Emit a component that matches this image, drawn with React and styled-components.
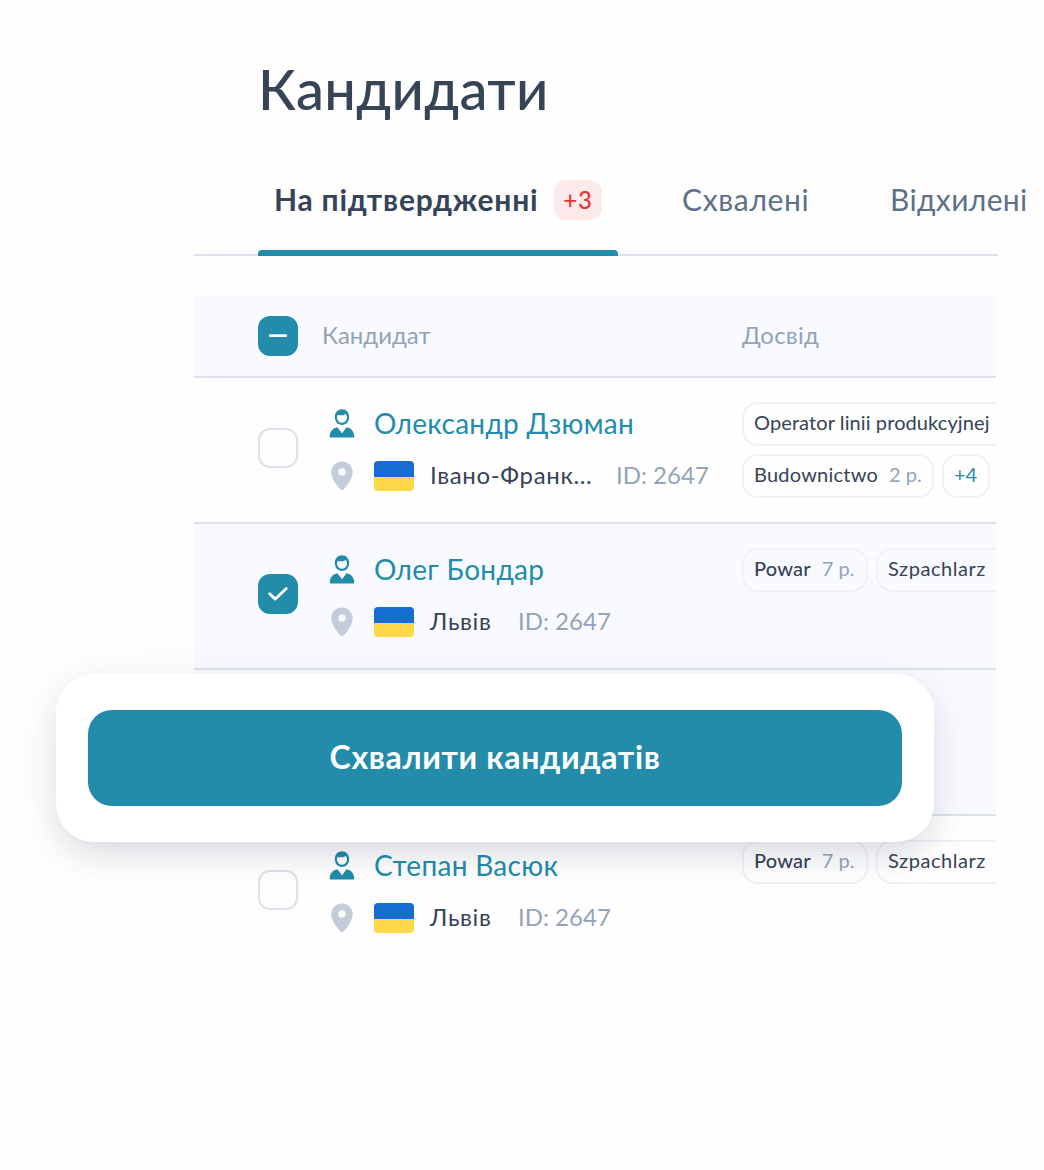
import React from "react";
import styled, { createGlobalStyle, css } from "styled-components";

const color = {
  teal: "#238cab",
  dark: "#374357",
  slate: "#5f7089",
  muted: "#93a3b8",
  line: "#dee1ea",
  chip: "#f0f1f8",
  tint: "#f9faff",
};

const GlobalStyle = createGlobalStyle`
  * { box-sizing: border-box; }
  body {
    margin: 0;
    background: #fefefe;
    font-family: Lato, "Open Sans", sans-serif;
    color: ${color.dark};
  }
`;

const Page = styled.main`
  position: relative;
  width: 1044px;
  height: 1170px;
  padding: 54px 0 0 194px;
  overflow: hidden;
`;

const Label = styled.span`
  display: block;
  flex: none;
  line-height: 1.2;
  white-space: nowrap;
`;

const Title = styled.h1`
  margin: 0;
  padding-left: 64px;
  height: 76px;
  line-height: 70px;
  font-size: 56px;
  font-weight: 500;
  letter-spacing: 0.4px;
`;

const Tabs = styled.nav`
  display: flex;
  gap: 48px;
  width: 804px;
  height: 112px;
  margin-top: 14px;
  padding-left: 64px;
  box-shadow: inset 0 -2px ${color.line};
`;

const Tab = styled.a`
  display: flex;
  flex: none;
  align-items: center;
  gap: 16px;
  width: ${(p) => p.$width}px;
  padding: 4px 16px 0;
  font-size: 30px;
  color: ${color.slate};
  letter-spacing: ${(p) => p.$track}px;
  border-bottom: 6px solid transparent;
  ${(p) =>
    p.$active &&
    css`
      position: relative;
      font-weight: 700;
      color: ${color.dark};
      &::after {
        content: "";
        position: absolute;
        left: 0;
        right: 0;
        bottom: -6px;
        height: 6px;
        border-radius: 4px 4px 0 0;
        background: ${color.teal};
      }
    `}
`;

const TabText = styled(Label)`
  width: ${(p) => p.$width}px;
`;

const Badge = styled.span`
  display: flex;
  align-items: center;
  justify-content: center;
  width: 48px;
  height: 40px;
  margin-top: 2px;
  border-radius: 12px;
  background: #fdeaeb;
  color: #ea3434;
  font-size: 24px;
  font-weight: 500;
  letter-spacing: 0.8px;
`;

const Table = styled.section`
  width: 802px;
  margin-top: 40px;
  overflow: hidden;
`;

const Row = styled.div`
  display: grid;
  grid-template-columns: 40px 396px 254px;
  column-gap: 24px;
  height: 146px;
  padding-left: 64px;
  border-bottom: 2px solid ${(p) => (p.$last ? "transparent" : color.line)};
  background: ${(p) => (p.$tinted ? color.tint : "transparent")};
`;

const HeadRow = styled(Row)`
  height: 82px;
  align-items: center;
  font-size: 24px;
  color: ${color.muted};
`;

const HeadLabel = styled(Label)`
  padding-bottom: 2px;
  letter-spacing: ${(p) => p.$track || 0}px;
`;

const Box = styled.span`
  display: flex;
  align-items: center;
  justify-content: center;
  width: 40px;
  height: 40px;
  margin-top: ${(p) => p.$top || 0}px;
  border-radius: 12px;
  border: 2px solid ${(p) => (p.$on ? color.teal : color.line)};
  background: ${(p) => (p.$on ? color.teal : "transparent")};
`;

const Person = styled.div`
  display: flex;
  flex-direction: column;
  gap: 12px;
  padding-top: ${(p) => p.$top}px;
`;

const Line = styled.div`
  display: flex;
  align-items: center;
  height: 40px;
`;

const IconSlot = styled.span`
  display: flex;
  justify-content: center;
  width: 40px;
  margin-right: 12px;
`;

const Name = styled(Label)`
  font-size: 28px;
  color: ${color.teal};
  letter-spacing: 0.3px;
`;

const Flag = styled.span`
  width: 40px;
  height: 30px;
  margin-right: 16px;
  border-radius: 4px;
  background: linear-gradient(#156dd1 0 16px, #ffd84a 16px);
`;

const City = styled(Label)`
  width: ${(p) => p.$width}px;
  margin-right: 24px;
  padding-bottom: 2px;
  font-size: 24px;
  letter-spacing: 0.65px;
`;

const Ident = styled(Label)`
  padding-bottom: 2px;
  font-size: 24px;
  color: ${color.muted};
`;

const Tags = styled.div`
  display: flex;
  flex-direction: column;
  gap: 8px;
  padding-top: 24px;
`;

const TagLine = styled.div`
  display: flex;
  gap: 8px;
`;

const Tag = styled.span`
  display: flex;
  flex: none;
  align-items: center;
  gap: 11px;
  width: ${(p) => p.$width}px;
  height: 44px;
  padding: 0 0 4px 10px;
  border: 2px solid ${color.chip};
  border-radius: 16px;
  font-size: 20px;
  font-weight: ${(p) => (p.$strong ? 500 : 400)};
  letter-spacing: ${(p) => p.$track || 0}px;
  color: ${(p) => (p.$more ? color.teal : color.dark)};
`;

const Years = styled(Label)`
  font-weight: 400;
  color: ${color.muted};
  letter-spacing: 0;
`;

const ActionCard = styled.div`
  position: absolute;
  left: 56px;
  top: 674px;
  width: 878px;
  height: 168px;
  padding: 36px 32px;
  border-radius: 38px;
  background: #fff;
  box-shadow: 0 14px 32px -6px rgba(40, 45, 80, 0.15), 0 8px 56px rgba(40, 50, 60, 0.06);
`;

const ActionButton = styled.button`
  display: flex;
  align-items: center;
  justify-content: center;
  width: 100%;
  height: 96px;
  padding: 0 0 1px;
  border: 0;
  border-radius: 24px;
  background: ${color.teal};
  color: #fff;
  font: 700 32px Lato, "Open Sans", sans-serif;
  letter-spacing: 0.65px;
`;

const Minus = () => (
  <svg width="20" height="20" viewBox="0 0 20 20">
    <path d="M2.3 9.7h15.4" stroke="#fff" strokeWidth="2.8" strokeLinecap="round" />
  </svg>
);

const Check = () => (
  <svg width="24" height="20" viewBox="0 0 24 20" fill="none">
    <path d="M3.6 9.8l5.7 5.3L20.3 4.6" stroke="#fff" strokeWidth="2.8" strokeLinecap="round" strokeLinejoin="round" />
  </svg>
);

const PersonIcon = () => (
  <svg width="26" height="30" viewBox="0 0 26 30" fill={color.teal}>
    <path
      fillRule="evenodd"
      d="M13 .3c4.2 0 7.2 3.300 7.200 7.700S17.200 16 13 16 5.800 12.400 5.800 8 8.800.3 13 .3zM8.100 6.600c-.6 4 1.500 7.200 4.900 7.200s5.400-3.200 4.900-6.500c-.2-1.200-.8-2-1.500-2.300-.8.9-1.900 1.300-3.500 1.300-1.600 0-3.500-.4-4.800.3z"
    />
    <path d="M8.400 18.200L13 24.200l4.600-6c4.200.7 7.600 4 7.700 9.100 0 .8-.5 1.300-1.300 1.300H2c-.8 0-1.300-.5-1.300-1.300.1-5.100 3.500-8.400 7.700-9.100z" />
  </svg>
);

const PinIcon = () => (
  <svg width="22" height="30" viewBox="0 0 22 30" fill="#c3ccd9">
    <path
      fillRule="evenodd"
      d="M11 .5C17 .5 21.700 5.200 21.700 11c0 6.400-5 13-9.200 17.400-.9.9-2.100.9-3 0C5.300 24 .3 17.400.3 11 .3 5.200 5 .5 11 .5zM11 7.200a3.700 3.700 0 1 0 0 7.400 3.700 3.700 0 0 0 0-7.400z"
    />
  </svg>
);

function Candidate({ name, city, cityWidth, tags, checked, tinted, last }) {
  const shift = last ? 4 : 0;
  return (
    <Row $tinted={tinted} $last={last}>
      <Box $on={checked} $top={50 + shift}>{checked && <Check />}</Box>
      <Person $top={26 + shift}>
        <Line>
          <IconSlot><PersonIcon /></IconSlot>
          <Name>{name}</Name>
        </Line>
        <Line>
          <IconSlot><PinIcon /></IconSlot>
          <Flag />
          <City $width={cityWidth}>{city}</City>
          <Ident>ID: 2647</Ident>
        </Line>
      </Person>
      <Tags>
        {tags.map((line, i) => (
          <TagLine key={i}>
            {line.map((t) => (
              <Tag key={t.text} $width={t.width} $track={t.track} $more={t.more} $strong={t.strong}>
                <Label>{t.text}</Label>
                {t.years && <Years>{t.years}</Years>}
              </Tag>
            ))}
          </TagLine>
        ))}
      </Tags>
    </Row>
  );
}

const shortTags = [
  [
    { text: "Powar", years: "7 р.", width: 126, track: 0.2, strong: true },
    { text: "Szpachlarz", width: 180, track: 0.55 },
  ],
];

const longTags = [
  [{ text: "Operator linii produkcyjnej", width: 300, track: 0.1 }],
  [
    { text: "Budownictwo", years: "2 р.", width: 192, track: 0.22 },
    { text: "+4", width: 48, more: true },
  ],
];

export default function App() {
  return (
    <Page>
      <GlobalStyle />
      <Title>Кандидати</Title>
      <Tabs>
        <Tab $active $width={360} $track={0.78}>
          <TabText $width={264}>На підтвердженні</TabText>
          <Badge><Label>+3</Label></Badge>
        </Tab>
        <Tab $width={160} $track={0.65}><TabText>Схвалені</TabText></Tab>
        <Tab $width={170} $track={0.35}><TabText>Відхилені</TabText></Tab>
      </Tabs>
      <Table>
        <HeadRow $tinted>
          <Box $on><Minus /></Box>
          <HeadLabel>Кандидат</HeadLabel>
          <HeadLabel $track={0.2}>Досвід</HeadLabel>
        </HeadRow>
        <Candidate name="Олександр Дзюман" city="Івано-Франк..." cityWidth={162} tags={longTags} />
        <Candidate name="Олег Бондар" city="Львів" cityWidth={64} tags={shortTags} checked tinted />
        <Row $tinted />
        <Candidate name="Степан Васюк" city="Львів" cityWidth={64} tags={shortTags} last />
      </Table>
      <ActionCard>
        <ActionButton><Label>Схвалити кандидатів</Label></ActionButton>
      </ActionCard>
    </Page>
  );
}
